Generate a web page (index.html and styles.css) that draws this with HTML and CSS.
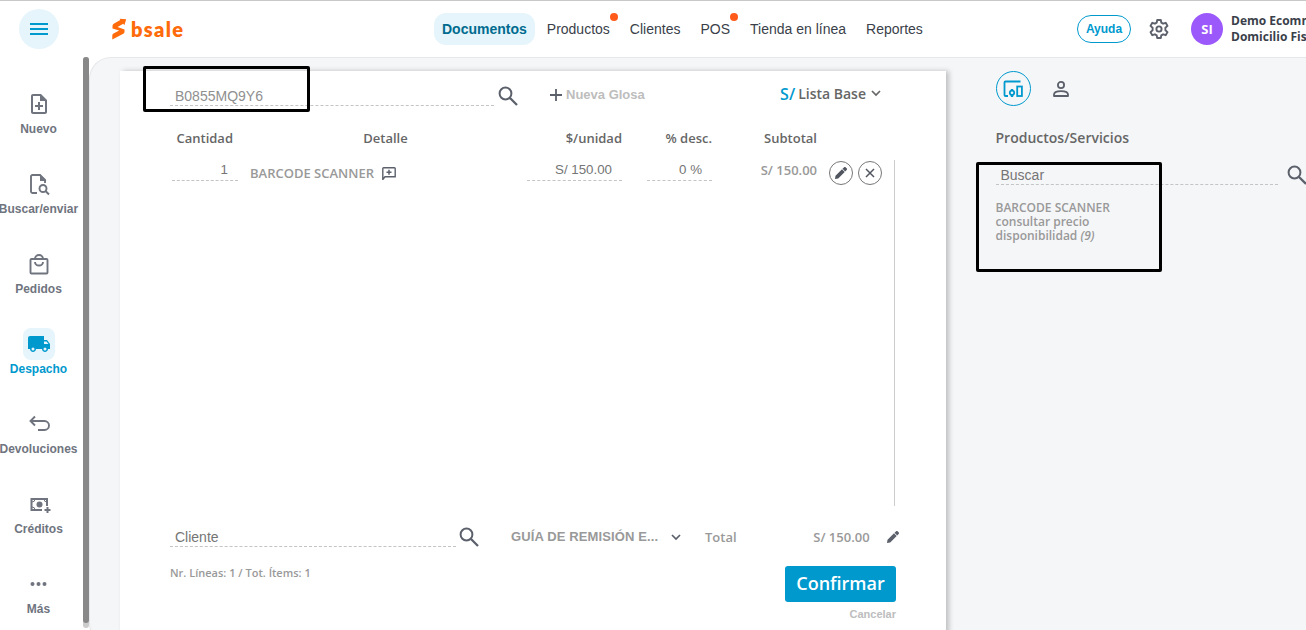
FILE: index.html
```html
<!DOCTYPE html>
<html lang="es">
<head>
  <meta charset="UTF-8" />
  <meta name="viewport" content="width=device-width, initial-scale=1.0"/>
  <title>bsale - Documentos</title>
  <link rel="stylesheet" href="styles.css">
</head>
<body>

<svg class="sprite" aria-hidden="true">
  <symbol id="search" viewBox="0 0 20 20"><circle cx="7.5" cy="7.5" r="5.9" fill="none" stroke="currentColor" stroke-width="2"/><path d="M12 12l7 7" fill="none" stroke="currentColor" stroke-width="2.3"/></symbol>
  <symbol id="chevron" viewBox="0 0 10 7"><path d="M1 1l4 4 4-4" fill="none" stroke="currentColor" stroke-width="1.7"/></symbol>
  <symbol id="pencil" viewBox="0 0 12 12"><path d="M0 12l.5-3.2L7 2.3l2.7 2.7-6.5 6.500zM7.5 1.800L8.900.4a1.300 1.300 0 0 1 1.900 0l.8.8a1.300 1.300 0 0 1 0 1.900l-1.400 1.400z" fill="currentColor"/></symbol>
</svg>

<header class="topbar">
  <button class="menu-btn"><svg width="18" height="14" viewBox="0 0 18 14"><path d="M0 2h18M0 7h18M0 12h18" stroke="#0099ce" stroke-width="2"/></svg></button>
  <div class="logo">
    <svg width="15" height="22" viewBox="0 0 15 22"><path d="M.5 10.500V8q0-1.500 1.200-2.300L8.300 2 7.700.700l6.500.5-1.800 6-1.100-1.500-5.800 3.200 7 2.600v2.200q0 1.300-1.200 2L.3 21.500v-4q0-1.300 1.200-2l5.700-3z" fill="#ff6a0a"/></svg>
    <span>bsale</span>
  </div>
  <nav class="nav">
    <a class="active">Documentos</a>
    <a class="dot">Productos</a>
    <a>Clientes</a>
    <a class="dot">POS</a>
    <a>Tienda en línea</a>
    <a>Reportes</a>
  </nav>
  <div class="account">
    <button class="help-btn">Ayuda</button>
    <svg class="gear" width="20" height="20" viewBox="0 0 20 20" fill="none" stroke="#5b606b" stroke-width="1.9" stroke-linejoin="round"><path d="M8.2 1h3.6l.5 2.7 1.8 1 2.6-.9 1.8 3.1-2.1 1.8v2.6l2.1 1.8-1.8 3.1-2.6-.9-1.8 1-.5 2.7H8.2l-.5-2.7-1.8-1-2.6.9-1.8-3.1 2.1-1.8V8.7L1.5 6.9l1.8-3.1 2.6.9 1.8-1z"/><circle cx="10" cy="10" r="2.6"/></svg>
    <div class="avatar">SI</div>
    <div class="company">Demo Ecommerce<br>Domicilio Fiscal</div>
  </div>
</header>

<div class="main">
  <aside class="sidebar">
    <a class="side-item">
      <span class="side-icon"><svg width="24" height="24" viewBox="0 0 24 24" fill="#6f747e"><path d="M14 2H6c-1.100 0-2 .9-2 2v16c0 1.100.9 2 2 2h12c1.100 0 2-.9 2-2V8zm4 18H6V4h7v5h5z"/><path d="M11 10h2v3h3v2h-3v3h-2v-3H8v-2h3z"/></svg></span>
      Nuevo
    </a>
    <a class="side-item">
      <span class="side-icon"><svg width="24" height="24" viewBox="0 0 24 24" fill="none" stroke="#6f747e" stroke-width="1.900"><path d="M10 21H5.500a1.500 1.500 0 0 1-1.500-1.500v-15A1.500 1.500 0 0 1 5.500 3H13l5 5v3"/><path d="M13 2.500v6.500h6.500z" fill="#6f747e" stroke="none"/><circle cx="16" cy="16.500" r="3.500"/><path d="M18.500 19l3.500 3.500"/></svg></span>
      Buscar/enviar
    </a>
    <a class="side-item">
      <span class="side-icon"><svg width="24" height="24" viewBox="0 0 24 24" fill="none" stroke="#6f747e" stroke-width="1.900"><rect x="3.500" y="7" width="17" height="14.500" rx="1"/><path d="M8 7a4 4 0 0 1 8 0M8 10a4 3.500 0 0 0 8 0"/></svg></span>
      Pedidos
    </a>
    <a class="side-item active">
      <span class="side-icon"><svg width="24" height="24" viewBox="0 0 24 24"><path d="M20 8h-3V4H3c-1.100 0-2 .9-2 2v11h2c0 1.660 1.340 3 3 3s3-1.340 3-3h6c0 1.660 1.340 3 3 3s3-1.340 3-3h2v-5zM6 18.500a1.500 1.500 0 1 1 0-3 1.500 1.500 0 0 1 0 3zm13.500-9l1.960 2.500H17V9.500zm-1.500 9a1.500 1.500 0 1 1 0-3 1.500 1.500 0 0 1 0 3z" fill="#0099ce"/></svg></span>
      Despacho
    </a>
    <a class="side-item">
      <span class="side-icon"><svg width="24" height="24" viewBox="0 0 24 24" fill="none" stroke="#6f747e" stroke-width="1.900"><path d="M8 4.500L3.500 9 8 13.500M4 9h13.500a4.500 4.500 0 0 1 0 9H11"/></svg></span>
      Devoluciones
    </a>
    <a class="side-item">
      <span class="side-icon"><svg width="24" height="24" viewBox="0 0 24 24" fill="none" stroke="#6f747e" stroke-width="2"><path d="M15 18H4.500V7h15.500v7"/><circle cx="12.500" cy="12.500" r="3" fill="#6f747e" stroke="none"/><path d="M5 10q3 0 3-3M20 10q-3 0-3-3M5 15q3 0 3 3" stroke-width="1"/><path d="M20.500 15v6M17.500 18h6" /></svg></span>
      Créditos
    </a>
    <a class="side-item">
      <span class="side-icon"><svg width="24" height="24" viewBox="0 0 24 24" fill="#6f747e"><circle cx="5.500" cy="12" r="2"/><circle cx="11.500" cy="12" r="2"/><circle cx="17.500" cy="12" r="2"/></svg></span>
      Más
    </a>
  </aside>
  <div class="scrollbar"><div class="thumb"></div></div>

  <div class="content">
    <section class="sheet">
      <div class="sheet-top">
        <div class="field code-field">B0855MQ9Y6</div>
        <svg class="icon-search"><use href="#search"/></svg>
        <div class="gloss"><svg width="12" height="12" viewBox="0 0 12 12"><path d="M6 0v12M0 6h12" stroke="#5b606b" stroke-width="1.800"/></svg>Nueva Glosa</div>
        <div class="price-list"><span class="currency">S/</span> Lista Base <svg class="chevron"><use href="#chevron"/></svg></div>
      </div>

      <div class="columns head">
        <span>Cantidad</span>
        <span>Detalle</span>
        <span>$/unidad</span>
        <span>% desc.</span>
        <span>Subtotal</span>
      </div>

      <div class="lines">
        <div class="columns item">
          <div class="cell">1</div>
          <div class="detail">BARCODE SCANNER
            <svg width="14" height="13" viewBox="0 0 14 13" fill="none" stroke="#5b606b"><path d="M.8 12.500V1.500q0-.8.8-.8h10.800q.8 0 .8.8v8.300H3z" stroke-width="1.400"/><path d="M7 2.800v5M4.500 5.300h5" stroke-width="1.500"/></svg>
          </div>
          <div class="cell">S/ 150.00</div>
          <div class="cell discount">0 %</div>
          <div class="subtotal">S/ 150.00</div>
          <div class="actions">
            <button><svg width="12" height="12"><use href="#pencil"/></svg></button>
            <button><svg width="10" height="10" viewBox="0 0 10 10"><path d="M1 1l8 8M9 1L1 9" stroke="#50555f" stroke-width="1.500"/></svg></button>
          </div>
        </div>
      </div>

      <div class="sheet-client">
        <div class="field client-field">Cliente</div>
        <svg class="icon-search"><use href="#search"/></svg>
        <div class="doc-type">GUÍA DE REMISIÓN E...</div>
        <svg class="chevron"><use href="#chevron"/></svg>
        <div class="total-label">Total</div>
        <div class="total">S/ 150.00</div>
        <svg class="edit-total" width="12" height="12"><use href="#pencil"/></svg>
      </div>

      <div class="sheet-bottom">
        <div class="summary">Nr. Líneas: 1 / Tot. Ítems: 1</div>
        <div class="buttons">
          <button class="confirm">Confirmar</button>
          <a class="cancel">Cancelar</a>
        </div>
      </div>
      <div class="mark mark-code"></div>
    </section>

    <section class="panel">
      <div class="tabs">
        <span class="tab active"><svg width="20" height="18" viewBox="0 0 20 18" fill="none" stroke="#0099ce" stroke-width="1.800"><path d="M17.500 1.500H2.500q-1 0-1 1v12.500q0 1 1 1H5"/><circle cx="9" cy="12.800" r="2.200"/><path d="M9 9v1.500M9 15.200V17" stroke-width="2.400"/><rect x="14.200" y="6.500" width="4.700" height="9.500"/></svg></span>
        <span class="tab"><svg width="16" height="16" viewBox="0 0 16 16" fill="none" stroke="#5b606b" stroke-width="1.800"><circle cx="8" cy="4" r="3.100"/><path d="M1 15v-1.500q0-3.400 7-3.400t7 3.400V15z" stroke-linejoin="round"/></svg></span>
      </div>
      <h2>Productos/Servicios</h2>
      <div class="panel-search">
        <div class="field">Buscar</div>
        <svg class="icon-search"><use href="#search"/></svg>
      </div>
      <div class="result">
        <div>BARCODE SCANNER</div>
        <div>consultar precio</div>
        <div>disponibilidad <em>(9)</em></div>
      </div>
      <div class="mark mark-result"></div>
    </section>
  </div>
</div>

</body>
</html>
```
FILE: styles.css
```css
* {
  box-sizing: border-box;
}

body {
  margin: 0;
  height: 630px;
  overflow: hidden;
  background: #fff;
  font-family: 'Open Sans', sans-serif;
  color: #5b606b;
}

button {
  font-family: inherit;
  padding: 0;
  cursor: pointer;
}

svg {
  display: block;
  flex-shrink: 0;
}

.sprite {
  display: none;
}

/* top bar */
.topbar {
  height: 57px;
  border-top: 1px solid #c8c8c8;
  display: flex;
  align-items: center;
  padding-left: 19px;
}

.menu-btn {
  width: 40px;
  height: 40px;
  border: none;
  border-radius: 50%;
  background: #e5f5fb;
  display: flex;
  align-items: center;
  justify-content: center;
}

.logo {
  width: 375px;
  padding-left: 53px;
  display: flex;
  align-items: center;
  gap: 4px;
  color: #ff6a0a;
  font: 800 20px/28px Lato, sans-serif;
  letter-spacing: 1.3px;
}

.nav {
  display: flex;
  gap: 4px;
  font: 14px/32px 'Liberation Sans', Arial, sans-serif;
  color: #3a3f4a;
}

.nav a {
  position: relative;
  padding: 0 8px;
  border-radius: 12px;
}

.nav .active {
  background: #e5f5fb;
  color: #006b8f;
  font-weight: bold;
}

.nav .dot::after {
  content: '';
  position: absolute;
  top: 0;
  right: 0;
  width: 8px;
  height: 8px;
  border-radius: 50%;
  background: #ff5a1a;
}

.account {
  display: flex;
  align-items: center;
  margin-left: auto;
  width: 229px;
  flex-shrink: 0;
  overflow: hidden;
}

.help-btn {
  width: 54px;
  height: 28px;
  flex-shrink: 0;
  border: 1px solid #0099ce;
  border-radius: 14px;
  background: #fff;
  color: #0099ce;
  font: bold 12px 'Liberation Sans', Arial, sans-serif;
}

.gear {
  margin: 0 22px 0 18px;
}

.avatar {
  width: 32px;
  height: 32px;
  flex-shrink: 0;
  border-radius: 50%;
  background: #9b59fb;
  color: #fff;
  font-size: 13px;
  font-weight: 700;
  line-height: 32px;
  text-align: center;
}

.company {
  margin-left: 8px;
  font-size: 12px;
  font-weight: 700;
  line-height: 16px;
  white-space: nowrap;
  color: #3a3f4a;
}

/* sidebar */
.main {
  display: flex;
  height: 588px;
}

.sidebar {
  width: 83px;
  padding-top: 31px;
  display: flex;
  flex-direction: column;
}

.side-item {
  width: 77px;
  height: 80px;
  flex-shrink: 0;
  display: flex;
  flex-direction: column;
  align-items: center;
  font: bold 12px/18px 'Liberation Sans', Arial, sans-serif;
  color: #6f747e;
}

.side-icon {
  width: 32px;
  height: 32px;
  flex-shrink: 0;
  border-radius: 8px;
  display: flex;
  align-items: center;
  justify-content: center;
}

.side-item.active {
  color: #0099ce;
}

.side-item.active .side-icon {
  background: #e5f5fb;
}

.scrollbar {
  width: 6px;
  height: 571px;
  border-radius: 3px;
  background: #ccc;
}

.thumb {
  height: 566px;
  border-radius: 3px;
  background: #888;
}

/* content */
.content {
  flex: 1;
  display: flex;
  border: 1px solid #e6e7e9;
  border-right: none;
  border-radius: 22px 0 0 22px;
  background: #f5f6f8;
  padding: 13px 0 0 30px;
  min-width: 0;
}

.sheet {
  position: relative;
  width: 826px;
  flex-shrink: 0;
  padding: 9px 50px 0;
  background: #fff;
  box-shadow: 3px 0 5px rgba(0,0,0,0.22);
}

.field {
  border-bottom: 1px dashed #c4c4c4;
  padding-left: 5px;
  font: 14px/20px 'Liberation Sans', Arial, sans-serif;
  color: #757575;
}

.icon-search {
  width: 20px;
  height: 20px;
}

.chevron {
  width: 10px;
  height: 7px;
}

.sheet-top {
  display: flex;
  align-items: center;
  height: 30px;
}

.code-field {
  width: 324px;
  height: 20px;
  margin: 1px 4px 0 0;
  line-height: 21px;
  color: #8f8f8f;
}

.sheet-top .icon-search {
  margin-top: 2px;
}

.gloss {
  display: flex;
  align-items: center;
  gap: 4px;
  margin-left: 32px;
  margin-bottom: 1px;
  font: bold 13px 'Liberation Sans', Arial, sans-serif;
  color: #bdbdbd;
}

.price-list {
  display: flex;
  align-items: center;
  gap: 4px;
  margin-left: auto;
  margin-right: 15px;
  margin-bottom: 3px;
  font-size: 14px;
  font-weight: 600;
  color: #666;
}

.price-list .chevron {
  margin-left: 1px;
}

.currency {
  margin-right: -1px;
  font-size: 16px;
  color: #0099ce;
}

.columns {
  display: grid;
  grid-template-columns: 66px 265px 95px 78px 93px 53px;
  column-gap: 12px;
  padding-left: 2px;
}

.head {
  margin-top: 18px;
  height: 20px;
  font-size: 13px;
  font-weight: 600;
  line-height: 20px;
  color: #666;
  text-align: right;
}

.head span:nth-child(1) {
  padding-right: 5px;
}

.head span:nth-child(2) {
  padding-left: 6px;
  text-align: center;
}

.lines {
  width: 725px;
  height: 346px;
  margin-top: 12px;
  border-right: 1px solid #ccc;
}

.item {
  font-size: 13px;
  color: #999;
}

.cell {
  height: 21px;
  border-bottom: 1px dashed #c4c4c4;
  padding-right: 10px;
  font: 13.3px/20px 'Liberation Sans', Arial, sans-serif;
  color: #757575;
  text-align: right;
}

.discount {
  margin-left: 13px;
}

.detail {
  display: flex;
  gap: 8px;
  align-items: center;
  height: 26px;
  font-weight: 600;
}

.subtotal {
  font-weight: 600;
  line-height: 21px;
  text-align: right;
}

.actions {
  display: flex;
  gap: 5px;
  margin-top: 1px;
}

.actions button {
  width: 24px;
  height: 24px;
  border: 1px solid #777;
  border-radius: 50%;
  background: #fff;
  color: #50555f;
  display: flex;
  align-items: center;
  justify-content: center;
}

.sheet-client {
  display: flex;
  align-items: center;
  height: 20px;
  margin: 21px -4px 0 0;
}

.client-field {
  width: 286px;
  height: 20px;
  margin-right: 3px;
}

.doc-type {
  width: 160px;
  margin-left: 32px;
  margin-bottom: 1px;
  font: bold 13px 'Liberation Sans', Arial, sans-serif;
  letter-spacing: 0.12px;
  white-space: nowrap;
  color: #999;
}

.total-label {
  margin-left: 24px;
  font-size: 13px;
  font-weight: 600;
  color: #999;
}

.total {
  width: 133px;
  font-size: 13px;
  font-weight: 600;
  color: #999;
  text-align: right;
}

.edit-total {
  margin-left: 17px;
  margin-bottom: 1px;
}

.sheet-bottom {
  display: flex;
  justify-content: space-between;
  margin-top: 19px;
}

.summary {
  font-size: 11px;
  font-weight: 600;
  line-height: 14px;
  color: #999;
}

.buttons {
  display: flex;
  flex-direction: column;
  align-items: flex-end;
}

.confirm {
  width: 111px;
  height: 36px;
  padding-bottom: 2px;
  border: none;
  border-radius: 3px;
  background: #0099ce;
  color: #fff;
  font-size: 18px;
  font-weight: 650;
}

.cancel {
  margin-top: 6px;
  font: bold 11px/13px 'Liberation Sans', Arial, sans-serif;
  color: #bdbdbd;
}

/* highlighted areas */
.mark {
  position: absolute;
  border: 3px solid #000;
  border-radius: 2px;
}

.mark-code {
  left: 23px;
  top: -5px;
  width: 167px;
  height: 46px;
}

.mark-result {
  left: 30px;
  top: 91px;
  width: 186px;
  height: 110px;
}

/* right panel */
.panel {
  position: relative;
  flex: 1;
  padding-left: 49.5px;
  min-width: 0;
}

.tabs {
  display: flex;
  align-items: center;
  gap: 13px;
}

.tab {
  width: 35px;
  height: 35px;
  border-radius: 50%;
  display: flex;
  align-items: center;
  justify-content: center;
}

.tab.active {
  border: 1px solid #0099ce;
}

.panel h2 {
  margin: 22px 0 0;
  font-size: 14px;
  font-weight: 600;
  line-height: 20px;
  color: #666;
}

.panel-search {
  display: flex;
  overflow: hidden;
}

.panel-search .field {
  width: 282px;
  height: 21px;
  margin-top: 16px;
  margin-right: 9px;
  flex-shrink: 0;
  line-height: 22px;
}

.panel-search .icon-search {
  margin-top: 17px;
}

.result {
  margin-top: 16px;
  font-size: 12px;
  font-weight: 600;
  line-height: 14px;
  color: #999;
}
```
